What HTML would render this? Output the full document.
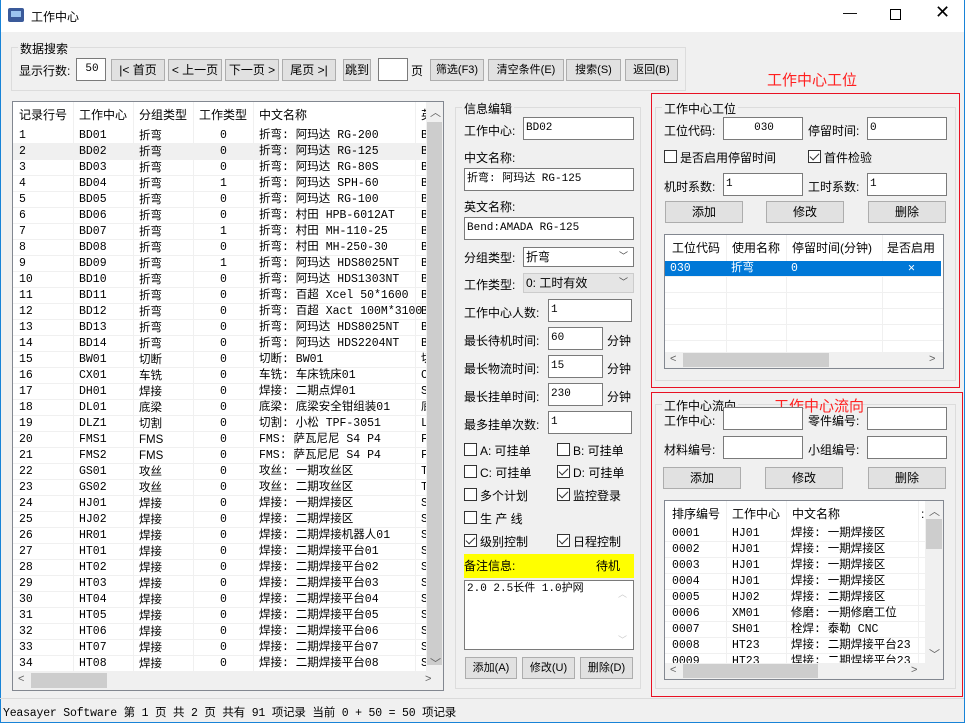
<!DOCTYPE html>
<html><head><meta charset="utf-8"><style>
*{box-sizing:border-box;margin:0;padding:0}
body{width:965px;height:723px;overflow:hidden;background:#f0f0f0;font:12px "Liberation Sans","Noto Sans CJK SC",sans-serif;color:#000;position:relative}
.a{position:absolute;white-space:nowrap}
.win{position:absolute;left:0;top:0;width:965px;height:723px;border:1px solid #1883d7;border-top:none}
.tb{position:absolute;left:0;top:0;width:965px;height:32px;background:#fff}
.gb{position:absolute;border:1px solid #dcdcdc}
.lg{position:absolute;background:#f0f0f0;padding:0 2px;top:-8px;left:6px;font-size:12px}
.in{position:absolute;background:#fff;border:1px solid #7a7a7a;height:23px;line-height:21px;padding-left:2px;font-family:"Liberation Mono","Noto Sans CJK SC",monospace;font-size:11px}
.bt{position:absolute;background:#e1e1e1;border:1px solid #adadad;height:22px;line-height:20px;text-align:center}
.red{position:absolute;border:1px solid #e81123}
.cb{position:absolute;width:13px;height:13px;border:1px solid #333;background:#fff}
.cb.k::after{content:"";position:absolute;left:3px;top:0px;width:4px;height:8px;border:solid #333;border-width:0 1.5px 1.5px 0;transform:rotate(45deg)}
.grid{position:absolute;background:#fff;border:1px solid #828790;overflow:hidden}
.r{position:absolute;left:0;height:16px;line-height:16px;width:100%;border-bottom:1px solid #f0f0f0;font-family:"Liberation Mono","Noto Sans CJK SC",monospace;font-size:11.5px}
.r span{position:absolute}
.hd{position:absolute;left:0;top:0;height:26px;line-height:26px;width:100%;font-size:12px}
.hd span{position:absolute}
.vl{position:absolute;top:0;width:1px;background:#f0f0f0}
.sb{position:absolute;background:#f0f0f0}
.th{position:absolute;background:#cdcdcd}
.ar{position:absolute;color:#606060;font-size:11px}
</style></head><body>
<div class="tb"></div>
<div class="a" style="left:8px;top:8px;width:16px;height:14px;background:#3a5a9a;border-radius:2px"></div>
<div class="a" style="left:11px;top:11px;width:10px;height:6px;background:#9cc4ef"></div>
<div class="a" style="left:31px;top:8px;font-size:12px">工作中心</div>
<div class="a" style="left:843px;top:4px;font-size:14px">—</div>
<div class="a" style="left:890px;top:9px;width:11px;height:11px;border:1px solid #000"></div>
<div class="a" style="left:935px;top:2px;font-size:18px;font-weight:300">✕</div>
<div class="win"></div>

<!-- search group -->
<div class="gb" style="left:11px;top:47px;width:675px;height:44px"><div class="lg">数据搜索</div></div>
<div class="a" style="left:19px;top:62px">显示行数:</div>
<div class="in" style="left:76px;top:58px;width:30px;text-align:center">50</div>
<div class="bt" style="left:111px;top:59px;width:54px">|&lt; 首页</div>
<div class="bt" style="left:168px;top:59px;width:54px">&lt; 上一页</div>
<div class="bt" style="left:225px;top:59px;width:54px">下一页 &gt;</div>
<div class="bt" style="left:282px;top:59px;width:54px">尾页 &gt;|</div>
<div class="bt" style="left:343px;top:59px;width:28px">跳到</div>
<div class="in" style="left:378px;top:58px;width:30px"></div>
<div class="a" style="left:411px;top:62px">页</div>
<div class="bt" style="left:430px;top:59px;width:54px;font-size:11px">筛选(F3)</div>
<div class="bt" style="left:488px;top:59px;width:76px;font-size:11px">清空条件(E)</div>
<div class="bt" style="left:566px;top:59px;width:55px;font-size:11px">搜索(S)</div>
<div class="bt" style="left:625px;top:59px;width:53px;font-size:11px">返回(B)</div>

<!-- left table -->
<div class="grid" style="left:12px;top:101px;width:432px;height:590px">
<div class="hd"><span style="left:6px">记录行号</span><span style="left:66px">工作中心</span><span style="left:126px">分组类型</span><span style="left:186px">工作类型</span><span style="left:246px">中文名称</span><span style="left:408px">英</span></div>
<div class="vl" style="left:60px;height:570px"></div><div class="vl" style="left:120px;height:570px"></div><div class="vl" style="left:180px;height:570px"></div><div class="vl" style="left:240px;height:570px"></div><div class="vl" style="left:402px;height:570px"></div>
<div id="rows"></div>
<div class="sb" style="left:413px;top:0;width:17px;height:569px"></div>
<div class="th" style="left:414px;top:20px;width:15px;height:543px"></div>
<div class="ar" style="left:417px;top:2px">︿</div>
<div class="ar" style="left:417px;top:553px">﹀</div>
<div class="sb" style="left:0;top:569px;width:430px;height:19px"></div>
<div class="th" style="left:18px;top:571px;width:76px;height:15px"></div>
<div class="ar" style="left:5px;top:571px">&lt;</div>
<div class="ar" style="left:412px;top:571px">&gt;</div>
</div>

<!-- middle -->
<div class="gb" style="left:455px;top:107px;width:186px;height:582px"><div class="lg">信息编辑</div></div>
<div class="a" style="left:464px;top:122px">工作中心:</div>
<div class="in" style="left:523px;top:117px;width:111px">BD02</div>
<div class="a" style="left:464px;top:149px">中文名称:</div>
<div class="in" style="left:464px;top:168px;width:170px">折弯: 阿玛达 RG-125</div>
<div class="a" style="left:464px;top:198px">英文名称:</div>
<div class="in" style="left:464px;top:217px;width:170px">Bend:AMADA RG-125</div>
<div class="a" style="left:464px;top:249px">分组类型:</div>
<div class="in" style="left:523px;top:247px;width:111px;height:20px;line-height:18px;font-family:'Liberation Sans','Noto Sans CJK SC',sans-serif;font-size:12px">折弯<span style="position:absolute;right:5px;top:-1px;font-size:9px;color:#444">﹀</span></div>
<div class="a" style="left:464px;top:276px">工作类型:</div>
<div class="in" style="left:523px;top:273px;width:111px;height:20px;line-height:18px;background:#e5e5e5;border-color:#ccc;font-family:'Liberation Sans','Noto Sans CJK SC',sans-serif;font-size:12px">0: 工时有效<span style="position:absolute;right:5px;top:-1px;font-size:9px;color:#444">﹀</span></div>
<div class="a" style="left:464px;top:304px">工作中心人数:</div>
<div class="in" style="left:548px;top:299px;width:84px">1</div>
<div class="a" style="left:464px;top:332px">最长待机时间:</div>
<div class="in" style="left:548px;top:327px;width:55px">60</div><div class="a" style="left:607px;top:332px">分钟</div>
<div class="a" style="left:464px;top:360px">最长物流时间:</div>
<div class="in" style="left:548px;top:355px;width:55px">15</div><div class="a" style="left:607px;top:360px">分钟</div>
<div class="a" style="left:464px;top:388px">最长挂单时间:</div>
<div class="in" style="left:548px;top:383px;width:55px">230</div><div class="a" style="left:607px;top:388px">分钟</div>
<div class="a" style="left:464px;top:416px">最多挂单次数:</div>
<div class="in" style="left:548px;top:411px;width:84px">1</div>
<div class="cb" style="left:464px;top:443px"></div><div class="a" style="left:480px;top:442px">A: 可挂单</div>
<div class="cb" style="left:557px;top:443px"></div><div class="a" style="left:573px;top:442px">B: 可挂单</div>
<div class="cb" style="left:464px;top:465px"></div><div class="a" style="left:480px;top:464px">C: 可挂单</div>
<div class="cb k" style="left:557px;top:465px"></div><div class="a" style="left:573px;top:464px">D: 可挂单</div>
<div class="cb" style="left:464px;top:488px"></div><div class="a" style="left:480px;top:487px">多个计划</div>
<div class="cb k" style="left:557px;top:488px"></div><div class="a" style="left:573px;top:487px">监控登录</div>
<div class="cb" style="left:464px;top:511px"></div><div class="a" style="left:480px;top:510px">生 产 线</div>
<div class="cb k" style="left:464px;top:534px"></div><div class="a" style="left:480px;top:533px">级别控制</div>
<div class="cb k" style="left:557px;top:534px"></div><div class="a" style="left:573px;top:533px">日程控制</div>
<div class="a" style="left:464px;top:554px;width:170px;height:24px;background:#ffff00;line-height:24px">备注信息:<span style="position:absolute;left:132px">待机</span></div>
<div class="in" style="left:464px;top:580px;width:170px;height:70px;line-height:16px">2.0 2.5长件 1.0护网<span style="position:absolute;right:6px;top:6px;color:#ccc;font-size:9px">︿</span><span style="position:absolute;right:6px;top:52px;color:#ccc;font-size:9px">﹀</span></div>
<div class="bt" style="left:465px;top:657px;width:52px;font-size:11px">添加(A)</div>
<div class="bt" style="left:522px;top:657px;width:53px;font-size:11px">修改(U)</div>
<div class="bt" style="left:580px;top:657px;width:53px;font-size:11px">删除(D)</div>

<!-- right top -->
<div class="a" style="left:767px;top:69px;font-size:15px;color:#ff2020">工作中心工位</div>
<div class="red" style="left:651px;top:93px;width:309px;height:295px"></div>
<div class="gb" style="left:655px;top:107px;width:301px;height:274px"><div class="lg">工作中心工位</div></div>
<div class="a" style="left:664px;top:122px">工位代码:</div>
<div class="in" style="left:723px;top:117px;width:80px;text-align:center">030</div>
<div class="a" style="left:808px;top:122px">停留时间:</div>
<div class="in" style="left:867px;top:117px;width:80px">0</div>
<div class="cb" style="left:664px;top:150px"></div><div class="a" style="left:680px;top:149px">是否启用停留时间</div>
<div class="cb k" style="left:808px;top:150px"></div><div class="a" style="left:824px;top:149px">首件检验</div>
<div class="a" style="left:664px;top:178px">机时系数:</div>
<div class="in" style="left:723px;top:173px;width:80px">1</div>
<div class="a" style="left:808px;top:178px">工时系数:</div>
<div class="in" style="left:867px;top:173px;width:80px">1</div>
<div class="bt" style="left:665px;top:201px;width:78px">添加</div>
<div class="bt" style="left:766px;top:201px;width:78px">修改</div>
<div class="bt" style="left:868px;top:201px;width:78px">删除</div>
<div class="grid" style="left:664px;top:234px;width:280px;height:135px">
<div class="hd"><span style="left:7px">工位代码</span><span style="left:67px">使用名称</span><span style="left:127px">停留时间(分钟)</span><span style="left:222px">是否启用</span></div>
<div class="vl" style="left:61px;height:117px"></div><div class="vl" style="left:121px;height:117px"></div><div class="vl" style="left:217px;height:117px"></div>
<div class="r" style="top:26px;background:#0078d7;color:#fff;width:276px"><span style="left:5px">030</span><span style="left:66px">折弯</span><span style="left:126px">0</span><span style="left:243px">✕</span></div>
<div class="r" style="top:42px"></div><div class="r" style="top:58px"></div><div class="r" style="top:74px"></div><div class="r" style="top:90px"></div>
<div class="sb" style="left:0;top:117px;width:278px;height:16px"></div>
<div class="th" style="left:18px;top:118px;width:146px;height:14px"></div>
<div class="ar" style="left:5px;top:118px">&lt;</div><div class="ar" style="left:264px;top:118px">&gt;</div>
</div>

<!-- right bottom -->
<div class="red" style="left:651px;top:392px;width:312px;height:305px"></div>
<div class="gb" style="left:655px;top:404px;width:301px;height:285px"><div class="lg">工作中心流向</div></div>
<div class="a" style="left:774px;top:395px;font-size:15px;color:#ff2020">工作中心流向</div>
<div class="a" style="left:664px;top:412px">工作中心:</div>
<div class="in" style="left:723px;top:407px;width:80px"></div>
<div class="a" style="left:808px;top:412px">零件编号:</div>
<div class="in" style="left:867px;top:407px;width:80px"></div>
<div class="a" style="left:664px;top:441px">材料编号:</div>
<div class="in" style="left:723px;top:436px;width:80px"></div>
<div class="a" style="left:808px;top:441px">小组编号:</div>
<div class="in" style="left:867px;top:436px;width:80px"></div>
<div class="bt" style="left:663px;top:467px;width:78px">添加</div>
<div class="bt" style="left:765px;top:467px;width:78px">修改</div>
<div class="bt" style="left:868px;top:467px;width:78px">删除</div>
<div class="grid" style="left:664px;top:500px;width:280px;height:180px">
<div class="hd"><span style="left:7px">排序编号</span><span style="left:67px">工作中心</span><span style="left:127px">中文名称</span><span style="left:256px">:</span></div>
<div class="vl" style="left:61px;height:162px"></div><div class="vl" style="left:121px;height:162px"></div><div class="vl" style="left:253px;height:162px"></div>
<div class="r" style="top:25px"><span style="left:7px">0001</span><span style="left:67px">HJ01</span><span style="left:126px">焊接: 一期焊接区</span></div>
<div class="r" style="top:41px"><span style="left:7px">0002</span><span style="left:67px">HJ01</span><span style="left:126px">焊接: 一期焊接区</span></div>
<div class="r" style="top:57px"><span style="left:7px">0003</span><span style="left:67px">HJ01</span><span style="left:126px">焊接: 一期焊接区</span></div>
<div class="r" style="top:73px"><span style="left:7px">0004</span><span style="left:67px">HJ01</span><span style="left:126px">焊接: 一期焊接区</span></div>
<div class="r" style="top:89px"><span style="left:7px">0005</span><span style="left:67px">HJ02</span><span style="left:126px">焊接: 二期焊接区</span></div>
<div class="r" style="top:105px"><span style="left:7px">0006</span><span style="left:67px">XM01</span><span style="left:126px">修磨: 一期修磨工位</span></div>
<div class="r" style="top:121px"><span style="left:7px">0007</span><span style="left:67px">SH01</span><span style="left:126px">栓焊: 泰勒 CNC</span></div>
<div class="r" style="top:137px"><span style="left:7px">0008</span><span style="left:67px">HT23</span><span style="left:126px">焊接: 二期焊接平台23</span></div>
<div class="r" style="top:153px"><span style="left:7px">0009</span><span style="left:67px">HT23</span><span style="left:126px">焊接: 二期焊接平台23</span></div>
<div class="sb" style="left:260px;top:0;width:18px;height:162px"></div>
<div class="th" style="left:261px;top:18px;width:16px;height:30px"></div>
<div class="ar" style="left:264px;top:2px">︿</div><div class="ar" style="left:264px;top:145px">﹀</div>
<div class="sb" style="left:0;top:162px;width:278px;height:16px"></div>
<div class="th" style="left:18px;top:163px;width:135px;height:14px"></div>
<div class="ar" style="left:5px;top:163px">&lt;</div><div class="ar" style="left:246px;top:163px">&gt;</div>
</div>

<!-- status bar -->
<div class="a" style="left:0;top:698px;width:964px;height:1px;background:#dadada"></div>
<div class="a" style="left:3px;top:704px;font-family:'Liberation Mono','Noto Sans CJK SC',monospace;font-size:11.5px;letter-spacing:-0.2px">Yeasayer Software 第 1 页 共 2 页 共有 91 项记录 当前 0 + 50 = 50 项记录</div>

<script>
var d=[["BD01","折弯",0,"折弯: 阿玛达 RG-200","B"],["BD02","折弯",0,"折弯: 阿玛达 RG-125","B"],["BD03","折弯",0,"折弯: 阿玛达 RG-80S","B"],["BD04","折弯",1,"折弯: 阿玛达 SPH-60","B"],["BD05","折弯",0,"折弯: 阿玛达 RG-100","B"],["BD06","折弯",0,"折弯: 村田 HPB-6012AT","B"],["BD07","折弯",1,"折弯: 村田 MH-110-25","B"],["BD08","折弯",0,"折弯: 村田 MH-250-30","B"],["BD09","折弯",1,"折弯: 阿玛达 HDS8025NT","B"],["BD10","折弯",0,"折弯: 阿玛达 HDS1303NT","B"],["BD11","折弯",0,"折弯: 百超 Xcel 50*1600","B"],["BD12","折弯",0,"折弯: 百超 Xact 100M*3100","B"],["BD13","折弯",0,"折弯: 阿玛达 HDS8025NT","B"],["BD14","折弯",0,"折弯: 阿玛达 HDS2204NT","B"],["BW01","切断",0,"切断: BW01","切"],["CX01","车铣",0,"车铣: 车床铣床01","C"],["DH01","焊接",0,"焊接: 二期点焊01","S"],["DL01","底梁",0,"底梁: 底梁安全钳组装01","底"],["DLZ1","切割",0,"切割: 小松 TPF-3051","L"],["FMS1","FMS",0,"FMS: 萨瓦尼尼 S4 P4","F"],["FMS2","FMS",0,"FMS: 萨瓦尼尼 S4 P4","F"],["GS01","攻丝",0,"攻丝: 一期攻丝区","T"],["GS02","攻丝",0,"攻丝: 二期攻丝区","T"],["HJ01","焊接",0,"焊接: 一期焊接区","S"],["HJ02","焊接",0,"焊接: 二期焊接区","S"],["HR01","焊接",0,"焊接: 二期焊接机器人01","S"],["HT01","焊接",0,"焊接: 二期焊接平台01","S"]];
for(var i=2;i<=8;i++)d.push(["HT0"+i,"焊接",0,"焊接: 二期焊接平台0"+i,"S"]);
var h="";d.forEach(function(r,i){h+='<div class="r" style="top:'+(26+i*16)+'px;width:413px'+(i==1?';background:#f0f0f0':'')+'"><span style="left:6px">'+(i+1)+'</span><span style="left:66px">'+r[0]+'</span><span style="left:126px;font-family:\'Liberation Sans\',\'Noto Sans CJK SC\',sans-serif">'+r[1]+'</span><span style="left:207px">'+r[2]+'</span><span style="left:246px">'+r[3]+'</span><span style="left:408px">'+r[4]+'</span></div>'});
document.getElementById("rows").innerHTML=h;
</script>
</body></html>
